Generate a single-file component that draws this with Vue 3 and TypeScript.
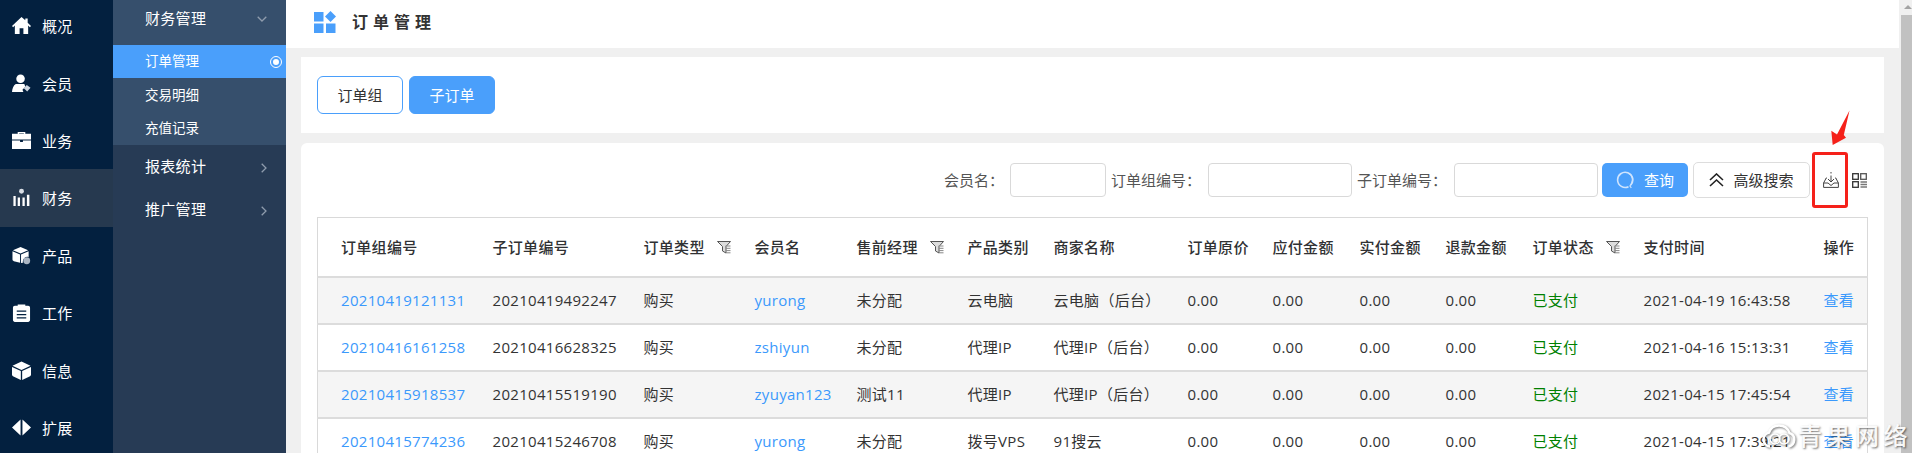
<script setup lang="ts">
const rail = [
  { name: '概况', icon: 'home' }, { name: '会员', icon: 'user' }, { name: '业务', icon: 'case' }, { name: '财务', icon: 'bars', active: true },
  { name: '产品', icon: 'box' }, { name: '工作', icon: 'clip' }, { name: '信息', icon: 'cube' }, { name: '扩展', icon: 'ext' },
]
const cols = [
  ['订单组编号', 152], ['子订单编号', 151], ['订单类型', 111, true], ['会员名', 102], ['售前经理', 111, true], ['产品类别', 86], ['商家名称', 134],
  ['订单原价', 85], ['应付金额', 87], ['实付金额', 86], ['退款金额', 87], ['订单状态', 111, true], ['支付时间', 180], ['操作', 67],
] as [string, number, boolean?][]
const rows = [
  ['20210419121131', '20210419492247', 'yurong', '未分配', '云电脑', '云电脑（后台）', '2021-04-19 16:43:58'],
  ['20210416161258', '20210416628325', 'zshiyun', '未分配', '代理IP', '代理IP（后台）', '2021-04-16 15:13:31'],
  ['20210415918537', '20210415519190', 'zyuyan123', '测试11', '代理IP', '代理IP（后台）', '2021-04-15 17:45:54'],
  ['20210415774236', '20210415246708', 'yurong', '未分配', '拨号VPS', '91搜云', '2021-04-15 17:39:21'],
]
</script>

<template>
  <div class="page">
    <nav class="rail">
      <div v-for="r in rail" :key="r.name" class="rail-item" :class="{ active: r.active }">
        <svg class="rail-icon" viewBox="0 0 20 20" fill="#fff">
          <path v-if="r.icon === 'home'" d="M10 1 0 10.5l1.2 1.3L3 10v9h5v-6h4v6h5v-9l1.800 1.800L20 10.500 16.500 7V2.500h-2.500V4.600z" />
          <template v-else-if="r.icon === 'user'">
            <circle cx="9" cy="5" r="4.500" />
            <path d="M4 10.500h9l1 3 -3 3 1 2.500H0c.3-4 1.500-7 4-8.500z" />
            <path d="M15.500 11.500 19.500 14.500 16 18.500 12.500 15z" fill="#cfd8e3" />
          </template>
          <template v-else-if="r.icon === 'case'">
            <path d="M6 3V1h8v2h6v6H0V3zM7.500 3h5V2.300h-5z" />
            <path d="M0 10h8.500v1.500h3V10H20v9H0z" />
          </template>
          <template v-else-if="r.icon === 'bars'">
            <circle cx="10" cy="3.500" r="2.600" fill="#d9dee5" />
            <path d="M1.500 8.500h2.400V19H1.500zM6 10h2.400v9H6zM11 10h2.400v9H11zM15.700 7h2.600v12h-2.600z" />
          </template>
          <template v-else-if="r.icon === 'box'">
            <path d="M1 4.500 9 1l8 3.500L9 8zM0.500 5.500 8.500 9v8.500L2 16c-1-.3-1.500-1-1.500-2zM9.500 9l8-3.500v6a5 5 0 0 0-6 6l-2 .5z" />
            <circle cx="15.500" cy="15.500" r="3.600" fill="#aab5c2" />
          </template>
          <template v-else-if="r.icon === 'clip'">
            <path fill-rule="evenodd" d="M6 1.500h8V3h3c1 0 2 .8 2 2v13c0 1-1 2-2 2H3c-1 0-2-1-2-2V5c0-1.200 1-2 2-2h3zM5 8v1.300h10V8zM5 11.500v1.300h10v-1.300zM5 15v1.300h10V15z" />
          </template>
          <template v-else-if="r.icon === 'cube'">
            <path d="M10 .5 19.500 5 10 9.500.5 5zM0 6.200 9.300 10.600V20L1 16c-.6-.3-1-.8-1-1.500zM20 6.200l-9.300 4.400V20l8.300-4c.6-.3 1-.8 1-1.500z" />
          </template>
          <template v-else>
            <path d="M9 1.500v17L0 10zM11 1.500 20 10l-9 8.500z" />
          </template>
        </svg>
        <span class="rail-name">{{ r.name }}</span>
      </div>
    </nav>

    <aside class="side">
      <div class="group open">
        <div class="group-head">财务管理
          <svg class="chev" viewBox="0 0 10 6" width="10" height="6"><path d="M.7.7 5 5 9.300.7" /></svg>
        </div>
        <div class="sub current">订单管理<i class="dot"></i></div>
        <div class="sub">交易明细</div>
        <div class="sub">充值记录</div>
      </div>
      <div class="group-head">报表统计
        <svg class="chev" viewBox="0 0 6 10" width="6" height="10"><path d="M.7.7 5 5 .7 9.300" /></svg>
      </div>
      <div class="group-head">推广管理
        <svg class="chev" viewBox="0 0 6 10" width="6" height="10"><path d="M.7.7 5 5 .7 9.300" /></svg>
      </div>
    </aside>

    <main class="main">
      <header class="title-bar">
        <svg width="22" height="22" viewBox="0 0 22 22" fill="#4a9ffb">
          <rect x="0" y="1" width="9.500" height="9.500" />
          <rect x="0" y="12.500" width="9.500" height="9.500" />
          <rect x="12" y="12.500" width="9.500" height="9.500" />
          <path d="M16.500 0 22 5.500 16.500 11 11 5.500z" />
        </svg>
        <h1>订单管理</h1>
      </header>

      <section class="card tabs">
        <button class="tab">订单组</button>
        <button class="tab on">子订单</button>
      </section>

      <section class="card list">
        <div class="filters">
          <label class="short">会员名：</label><input class="i1" />
          <label>订单组编号：</label><input class="i2" />
          <label>子订单编号：</label><input class="i2" />
          <button class="query">
            <svg width="18" height="18" viewBox="0 0 18 18" fill="none" stroke="#cfe4fd" stroke-width="1.600"><path d="M12.500 15.700A7.600 7.600 0 1 1 14.800 14" /><path d="M13 2.500C15.500 4 16.500 6.500 16.400 9 16.300 11.500 15.300 13.500 14 15L15.300 16.800" stroke-width="1.200" /></svg>
            查询
          </button>
          <button class="adv">
            <svg width="15" height="14" viewBox="0 0 15 14" fill="none" stroke="#222" stroke-width="1.600"><path d="M1 7 7.500 1 14 7M1 13 7.500 7 14 13" /></svg>
            高级搜索
          </button>
          <span class="tool dl">
            <svg width="16" height="16" viewBox="0 0 16 16" fill="none" stroke="#444" stroke-width="1"><path d="M8 0v1.500M8 3.500V10M5 7l3 3 3-3M4 6H3.200L.6 11v4.400h14.800V11L12.800 6H12M.6 11H5l3 2.500 3-2.500h4.400" /></svg>
          </span>
          <span class="tool">
            <svg width="15" height="15" viewBox="0 0 15 15" fill="none" stroke="#333" stroke-width="1.300"><rect x=".7" y=".7" width="5.600" height="5.600" /><rect x="8.700" y=".7" width="5.600" height="5.600" stroke="#555" /><rect x=".7" y="8.700" width="5.600" height="5.600" /><path d="M8.500 9h6.500M8.500 11.500h6.500M8.500 14h6.500" stroke="#777" /></svg>
          </span>
        </div>

        <table class="grid">
          <colgroup><col v-for="c in cols" :key="c[0]" :style="{ width: c[1] + 'px' }" /></colgroup>
          <thead>
            <tr>
              <th v-for="c in cols" :key="c[0]">
                {{ c[0] }}
                <svg v-if="c[2]" class="funnel" viewBox="0 0 14 13" width="14" height="13"><path d="M.5.5h13L9 5.500V12L5.500 10V5.500z" fill="#ddd" stroke="#555" /><path d="M8.500 5h5M9 7.300h4.500M9 9.600h4.500M9 11.800h4.500" stroke="#888" /></svg>
              </th>
            </tr>
          </thead>
          <tbody>
            <tr v-for="row in rows" :key="row[1]">
              <td class="link">{{ row[0] }}</td>
              <td>{{ row[1] }}</td>
              <td>购买</td>
              <td class="link">{{ row[2] }}</td>
              <td>{{ row[3] }}</td>
              <td>{{ row[4] }}</td>
              <td>{{ row[5] }}</td>
              <td>0.00</td><td>0.00</td><td>0.00</td><td>0.00</td>
              <td class="paid">已支付</td>
              <td>{{ row[6] }}</td>
              <td class="link">查看</td>
            </tr>
          </tbody>
        </table>
      </section>
    </main>

    <div class="scrollbar">
      <i class="up"></i>
      <i class="thumb"></i>
    </div>

    <div class="mark-box"></div>
    <svg class="arrow" width="20" height="36" viewBox="0 0 20 36"><path d="M1.700 35 .3 20.700 6 24.500 18.500 .5 12.800 25 15 27.700z" fill="#f5211a" /></svg>
    <div class="watermark">
      <svg class="cloud" width="36" height="24" viewBox="0 0 36 24" fill="none" stroke="#fff" stroke-width="2.400"><path d="M9 22.500a7 7 0 0 1-1-13.800C9.500 4 13.500 1.500 18 1.500c5 0 9 3 10.500 7.500a7 7 0 0 1-1 13.500" /><circle cx="14" cy="15" r="5" stroke-width="1.600" /><circle cx="23" cy="15" r="5" stroke-width="1.600" /></svg>
      <span>青果网络</span>
    </div>
  </div>
</template>

<style scoped>
.page {
  position: relative;
  display: flex;
  width: 1912px;
  height: 453px;
  overflow: hidden;
  background: #f0f0f0;
  font: 15px/1.400 "Open Sans", "Noto Sans CJK SC", sans-serif;
  color: #333;
}
.rail {
  width: 113px;
  flex: none;
  margin-top: -3px;
  background: #03203f;
  color: #fff;
}
.rail-item {
  display: flex;
  align-items: center;
  gap: 11px;
  height: 57.400px;
  padding-left: 12px;
  box-sizing: border-box;
  letter-spacing: .3px;
}
.rail-name { padding-top: 2px; }
.rail-item.active { background: #26394f; }
.rail-icon { width: 19px; height: 19px; flex: none; }
.side {
  width: 173px;
  flex: none;
  background: #273b55;
  color: #fff;
}
.group { background: #364f6c; }
.group-head {
  display: flex;
  align-items: center;
  justify-content: space-between;
  height: 43px;
  padding: 1px 19px 0 32px;
  box-sizing: border-box;
  letter-spacing: .3px;
}
.group-head .chev { margin-top: 3px; }
.group.open .group-head { height: 45px; padding: 0 19px 8px 32px; }
.group.open .group-head .chev { margin-top: 0; }
.chev { fill: none; stroke: #8f9cad; stroke-width: 1.300; }
.sub {
  display: flex;
  align-items: center;
  justify-content: space-between;
  height: 33.300px;
  padding: 0 4px 0 32px;
  font-size: 13.500px;
}
.sub.current { background: #4a9ffb; }
.dot {
  width: 6px;
  height: 6px;
  border-radius: 50%;
  background: #fff;
  border: 2px solid #4a9ffb;
  outline: 1.500px solid #fff;
  outline-offset: 0;
  margin-right: 1px;
}
.main { flex: 1; min-width: 0; display: flex; flex-direction: column; padding-right: 28px; }
.title-bar {
  display: flex;
  align-items: center;
  gap: 16px;
  height: 48px;
  flex: none;
  padding: 0 0 4px 28px;
  box-sizing: border-box;
  margin-right: -15px;
  background: #fff;
}
.title-bar h1 { margin: 0; font-size: 16px; font-weight: 700; letter-spacing: 5px; color: #333; }
.card { background: #fff; margin: 0 0 10px 15px; }
.tabs {
  display: flex;
  gap: 6px;
  height: 76px;
  margin-top: 9px;
  padding: 19px 16px;
  box-sizing: border-box;
}
.tab {
  width: 86px;
  height: 38px;
  border: 1px solid #4a9ffb;
  border-radius: 6px;
  background: #fff;
  color: #333;
  font: inherit;
}
.tab.on { background: #4a9ffb; color: #fff; }
.list { flex: 1; border-radius: 6px 6px 0 0; padding: 0 17px 0 16px; margin-bottom: 0; }
.filters {
  display: flex;
  align-items: center;
  justify-content: flex-end;
  height: 74px;
  color: #555;
}
.filters label { margin-right: 7px; white-space: nowrap; }
.filters label.short { margin-right: 6px; }
.filters input {
  height: 34px;
  box-sizing: border-box;
  border: 1px solid #d9d9d9;
  border-radius: 4px;
  margin-right: 5px;
  padding: 0;
}
.i1 { width: 96px; }
.i2 { width: 144px; }
.filters .i2:nth-of-type(3) { margin-right: 4px; }
.query, .adv {
  display: flex;
  align-items: center;
  justify-content: center;
  font: inherit;
  border-radius: 5px;
}
.query {
  width: 86px;
  height: 34px;
  gap: 10px;
  border: 0;
  background: #4a9ffb;
  color: #fff;
  margin-right: 5px;
}
.adv {
  width: 117px;
  height: 36px;
  gap: 9px;
  border: 1px solid #ddd;
  background: #fff;
  color: #333;
}
.tool { display: flex; align-items: center; justify-content: center; }
.dl { width: 36px; margin-left: 3px; margin-right: 3px; }
.grid {
  table-layout: fixed;
  width: 1550px;
  border-collapse: collapse;
  border: 1px solid #d9d9d9;
}
.grid th, .grid td {
  padding: 0 0 0 23px;
  text-align: left;
  white-space: nowrap;
  border-bottom: 2px solid #dcdcdc;
  letter-spacing: .3px;
}
.grid th { height: 58px; font-weight: 500; color: #303133; }
.grid td { height: 45px; }
.grid tbody tr:nth-child(odd) td { background: #f5f5f5; }
.funnel { margin-left: 8px; vertical-align: -1px; }
.link { color: #3b99fc; }
.paid { color: #008000; }
.scrollbar {
  position: absolute;
  top: 0;
  right: 0;
  bottom: 0;
  width: 13px;
  background: #f0f0f0;
}
.up {
  position: absolute;
  top: 5px;
  right: 0;
  border: 4px solid transparent;
  border-top: 0;
  border-bottom: 4px solid #a3a3a3;
}
.thumb {
  position: absolute;
  top: 15px;
  right: 0;
  bottom: 0;
  width: 11px;
  background: #c1c1c1;
}
.mark-box {
  position: absolute;
  left: 1812px;
  top: 152px;
  width: 36px;
  height: 56px;
  box-sizing: border-box;
  border: 3px solid #f5211a;
  border-radius: 3px;
}
.arrow { position: absolute; left: 1831px; top: 110px; }
.watermark {
  position: absolute;
  right: 0;
  bottom: 4px;
  display: flex;
  align-items: center;
  gap: 1px;
  color: rgba(255, 255, 255, .95);
  font-size: 24px;
  line-height: 26px;
  letter-spacing: 4.500px;
  font-weight: 500;
  text-shadow: 1px 1px 2px rgba(0, 0, 0, .55);
}
.cloud { filter: drop-shadow(1px 1px 1px rgba(0, 0, 0, .55)); }
</style>
